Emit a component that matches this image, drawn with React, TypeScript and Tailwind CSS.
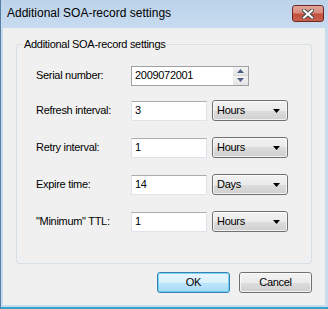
import React from "react";

const body = { fontFamily: '"Liberation Sans", Arial, sans-serif' };

function Dropdown({ value }: { value: string }) {
  return (
    <div className="relative flex h-[21px] w-[76px] items-center rounded-[3px] border border-[#707070] bg-[linear-gradient(#f2f2f2_0%,#ebebeb_50%,#dddddd_50%,#cfcfcf_100%)] pl-[4px] text-[11px] tracking-[-0.3px] text-black">
      <div className="pointer-events-none absolute inset-0 rounded-[2px] border border-white/70" />
      <span className="relative">{value}</span>
      <svg className="absolute right-[7px] top-[8px]" width="7" height="4" viewBox="0 0 7 4">
        <path d="M0 0H7L3.5 4Z" fill="#000" />
      </svg>
    </div>
  );
}

function TextBox({ value }: { value: string }) {
  return (
    <div className="flex h-[20px] w-[76px] items-center border border-[#e2e3ea] border-t-[#abadb3] bg-white pl-[3px] text-[11px] tracking-[-0.3px] text-black">
      {value}
    </div>
  );
}

function Row({ label, value, unit, className }: { label: string; value: string; unit: string; className?: string }) {
  return (
    <div className={"flex h-[21px] items-center " + (className ?? "")}>
      <div className="w-[95px] text-[11px] tracking-[-0.3px] text-black">{label}</div>
      <TextBox value={value} />
      <div className="ml-[5px]">
        <Dropdown value={unit} />
      </div>
    </div>
  );
}

function Button({ label, primary }: { label: string; primary?: boolean }) {
  return (
    <div
      className={
        "relative flex h-[21px] w-[73px] items-center justify-center rounded-[3px] border text-[11px] tracking-[-0.3px] text-black " +
        (primary
          ? "border-[#3c7fb1] bg-[linear-gradient(#eaf6fd_0%,#d9f0fc_50%,#bee6fd_50%,#a7d9f5_100%)]"
          : "border-[#707070] bg-[linear-gradient(#f2f2f2_0%,#ebebeb_50%,#dddddd_50%,#cfcfcf_100%)]")
      }
    >
      <div
        className={
          "pointer-events-none absolute inset-0 rounded-[2px] border " +
          (primary ? "border-[#48cbf5]/70" : "border-white/70")
        }
      />
      <span className="relative">{label}</span>
    </div>
  );
}

export default function App() {
  return (
    <div className="h-[309px] w-[328px] overflow-hidden bg-[#c9dcef]" style={body}>
      <div className="flex h-full flex-col border-l border-[#5a7ea3] bg-[linear-gradient(#bcd3ea,#c8dcf0_30px,#c8dcf0)]">
        {/* title bar */}
        <div className="flex h-[28px] items-start">
          <div className="ml-[6px] mt-[6px] text-[12px] leading-[15px] text-black">Additional SOA-record settings</div>
          <div className="ml-auto mr-[4px] mt-[5px] flex h-[17px] w-[32px] items-center justify-center rounded-[3px] border border-[#6d2a23] bg-[linear-gradient(#e1a799_0%,#d98b7b_45%,#c4503f_55%,#c9604d_100%)]">
            <svg width="12" height="10" viewBox="0 0 12 10">
              <path d="M2 1.5L10 8.5M10 1.5L2 8.5" stroke="#4a4a4a" strokeWidth="4" strokeLinecap="square" />
              <path d="M2 1.5L10 8.5M10 1.5L2 8.5" stroke="#ffffff" strokeWidth="2" strokeLinecap="square" />
            </svg>
          </div>
        </div>
        {/* client */}
        <div className="ml-[2px] mr-[3px] flex h-[277px] flex-col bg-[#f0f0f0]">
          <fieldset className="mx-[13px] mt-[10px] h-[226px] rounded-[3px] border border-[#d5dfe5] px-[6px]">
            <legend className="ml-0 px-[1px] text-[11px] leading-[13px] tracking-[-0.3px] text-black">
              Additional SOA-record settings
            </legend>
            <div className="flex flex-col px-[13px] pt-[14px]">
              <div className="flex h-[21px] items-center">
                <div className="w-[95px] text-[11px] tracking-[-0.3px] text-black">Serial number:</div>
                <div className="flex h-[20px] w-[118px] items-stretch border border-[#a0a0a0] bg-white">
                  <div className="flex flex-1 items-center pl-[3px] text-[11px] tracking-[-0.3px] text-black">2009072001</div>
                  <div className="flex w-[15px] flex-col">
                    <div className="flex flex-1 items-center justify-center border-b border-[#d8d8d8] bg-[linear-gradient(#f4f4f4,#e4e4e4)]">
                      <svg width="7" height="4" viewBox="0 0 7 4"><path d="M3.5 0L7 4H0Z" fill="#4d6185" /></svg>
                    </div>
                    <div className="flex flex-1 items-center justify-center bg-[linear-gradient(#f4f4f4,#e4e4e4)]">
                      <svg width="7" height="4" viewBox="0 0 7 4"><path d="M0 0H7L3.5 4Z" fill="#4d6185" /></svg>
                    </div>
                  </div>
                </div>
              </div>
              <Row className="mt-[14px]" label="Refresh interval:" value="3" unit="Hours" />
              <Row className="mt-[16px]" label="Retry interval:" value="1" unit="Hours" />
              <Row className="mt-[16px]" label="Expire time:" value="14" unit="Days" />
              <Row className="mt-[16px]" label={'"Minimum" TTL:'} value="1" unit="Hours" />
            </div>
          </fieldset>
          <div className="mr-[13px] mt-[8px] flex justify-end gap-[9px]">
            <Button label="OK" primary />
            <Button label="Cancel" />
          </div>
        </div>
        <div className="flex-1 border-b-2 border-[#38a3c9]" />
      </div>
    </div>
  );
}
